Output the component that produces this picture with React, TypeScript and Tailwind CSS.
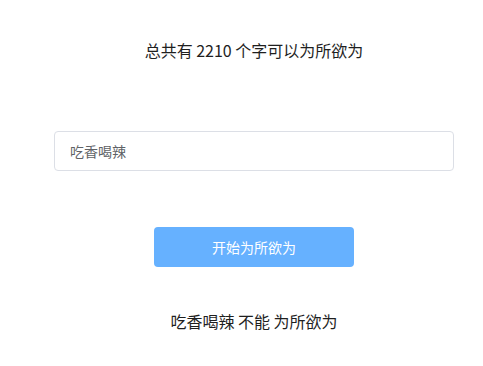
export default function App() {
  const font = { fontFamily: '"Noto Sans CJK SC", "Microsoft YaHei", sans-serif' };
  return (
    <div className="w-[483px] h-[366px] bg-white" style={font}>
      <div className="ml-[54px] w-[400px] flex flex-col items-center pt-[38px]">
        <div className="text-[16px] leading-[24px] text-[#1f1f1f]">总共有 2210 个字可以为所欲为</div>
        <div className="mt-[69px] w-[400px] h-[40px] border border-[#dcdfe6] rounded-[4px] flex items-center px-[15px]">
          <span className="text-[14px] leading-[20px] text-[#606266] -mt-[1px]">吃香喝辣</span>
        </div>
        <button className="mt-[56px] w-[200px] h-[40px] rounded-[4px] bg-[#66b1ff] text-white text-[14px] flex items-center justify-center">
          开始为所欲为
        </button>
        <div className="mt-[42px] text-[16px] leading-[24px] text-[#1f1f1f]">吃香喝辣 不能 为所欲为</div>
      </div>
    </div>
  );
}
